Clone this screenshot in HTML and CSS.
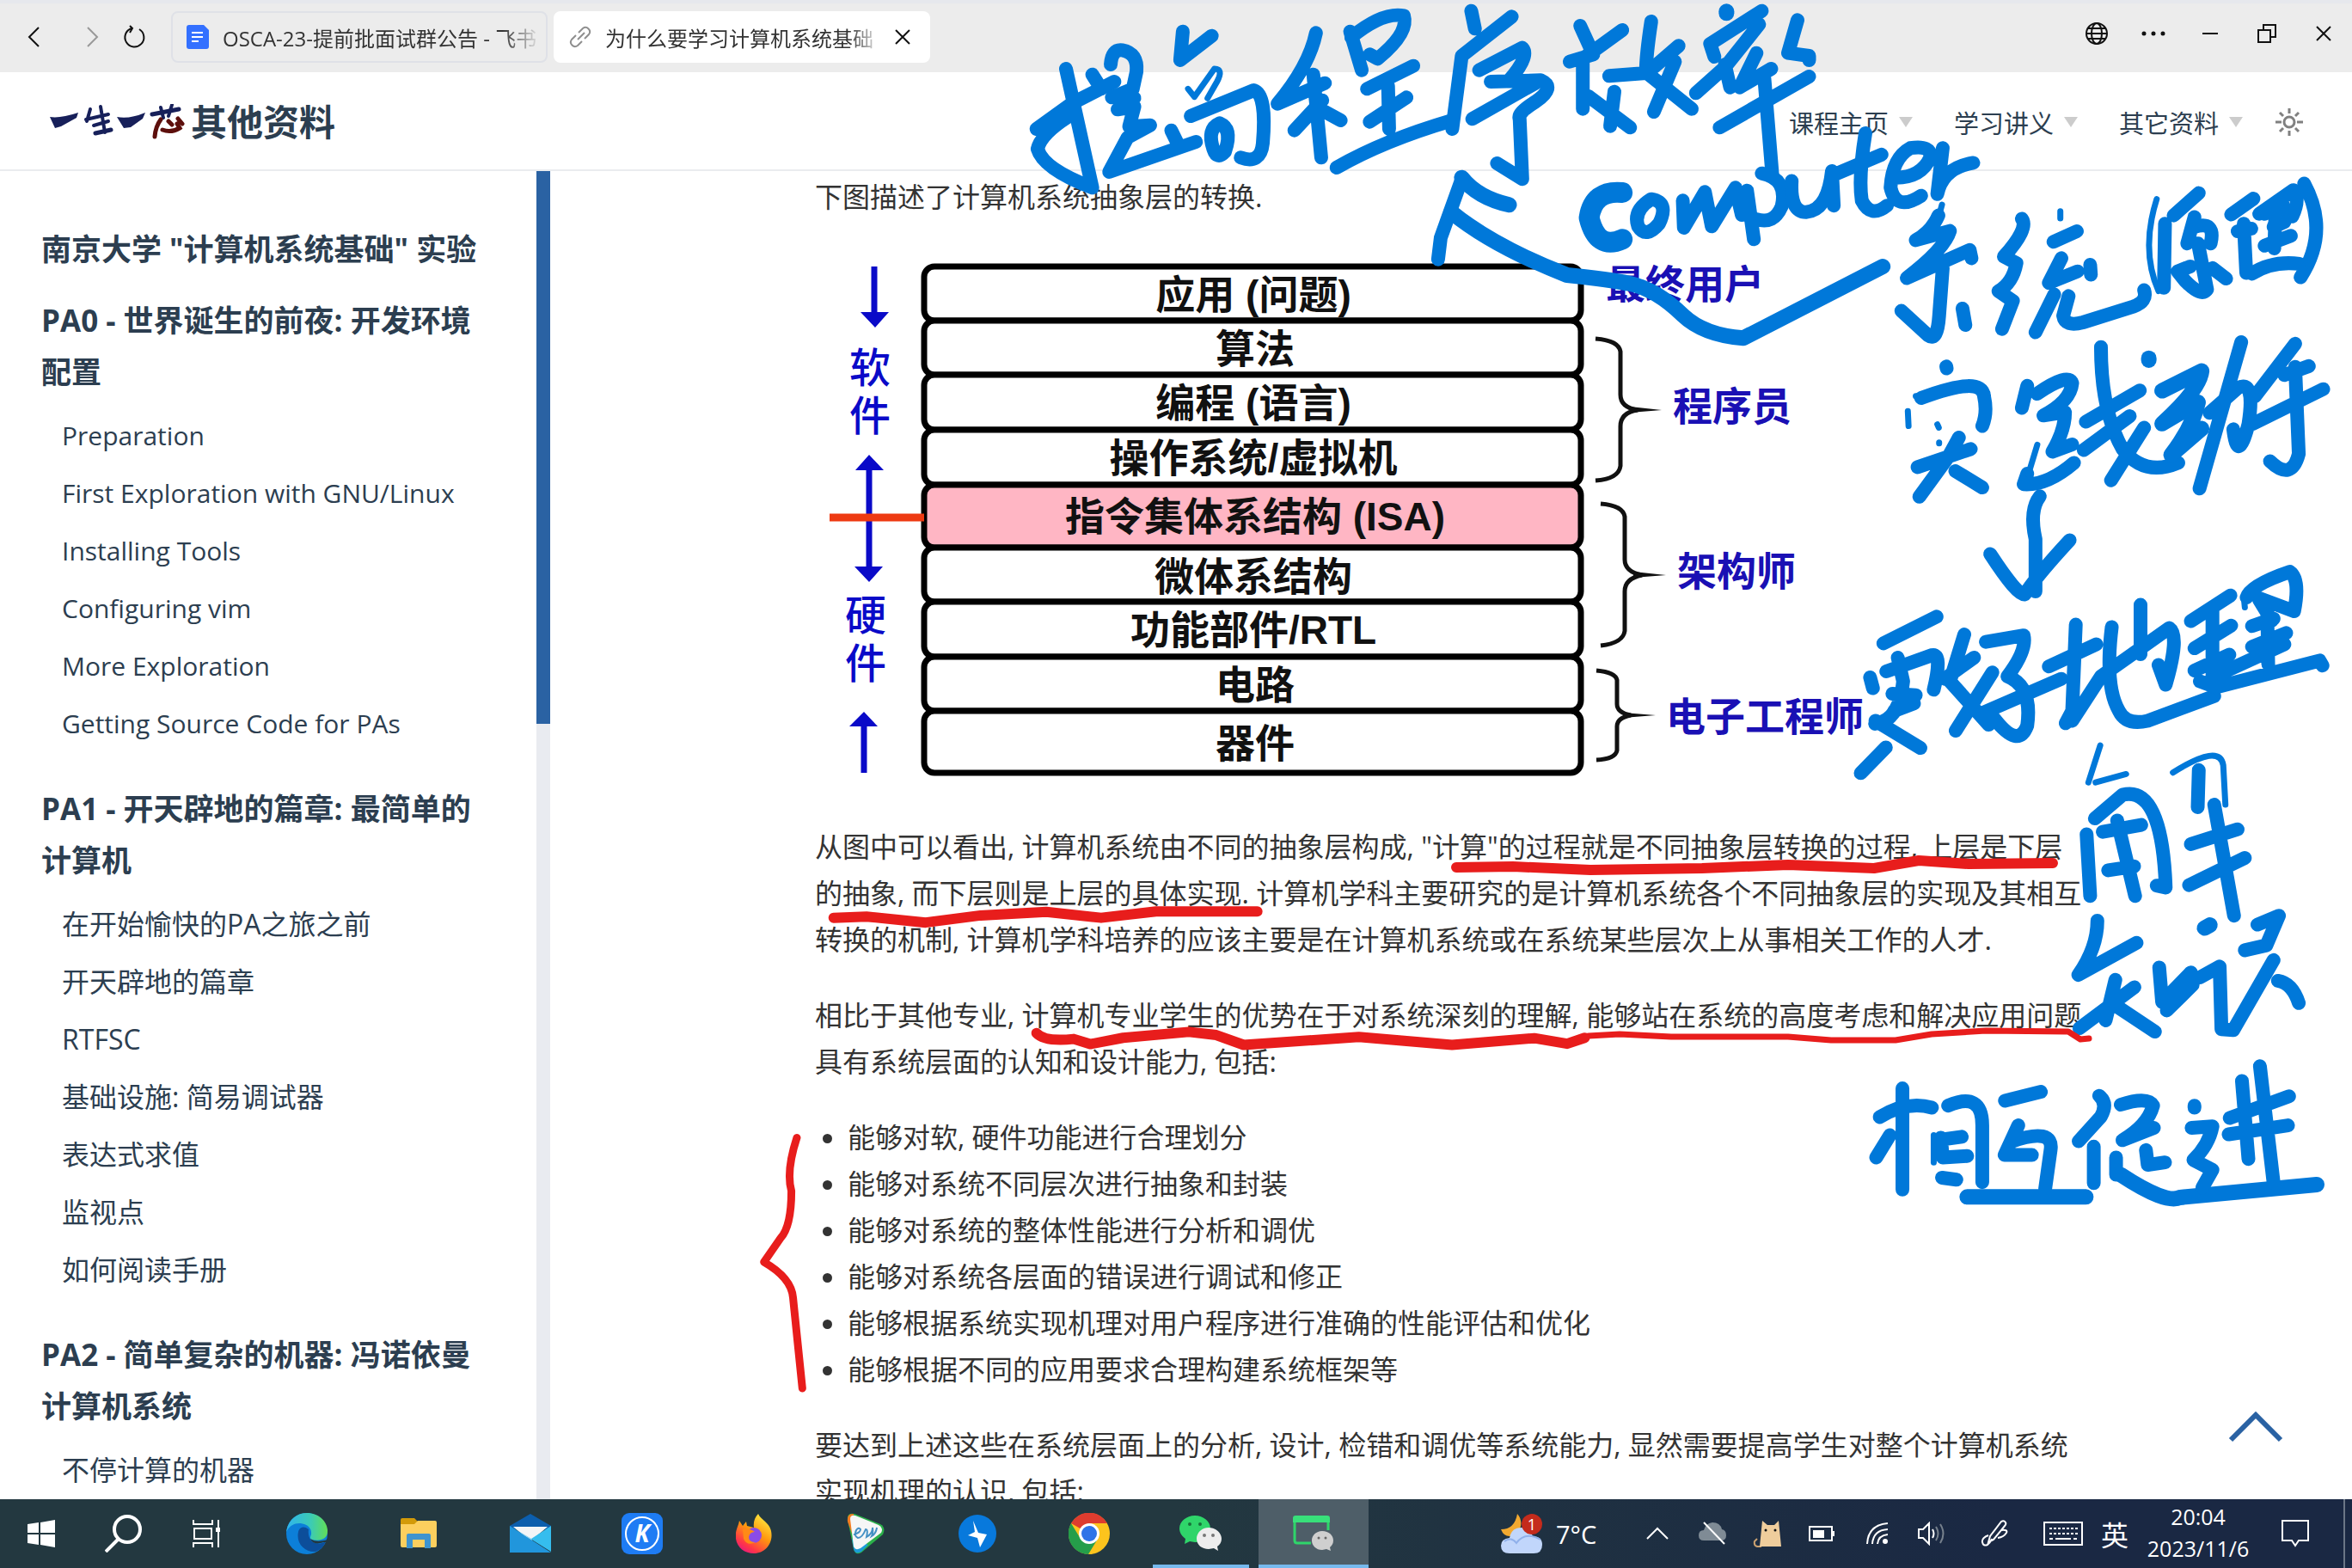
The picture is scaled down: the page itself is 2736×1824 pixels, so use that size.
FILE: index.html
```html
<!DOCTYPE html>
<html lang="zh-CN">
<head>
<meta charset="utf-8">
<title>为什么要学习计算机系统基础</title>
<link rel="stylesheet" href="styles.css">
</head>
<body>
<div class="screen">

<header class="browser">
  <div class="browser-nav">
    <button class="nav-btn back" aria-label="后退"><svg width="20" height="28" viewBox="0 0 20 28"><path d="M15 3 4 14l11 11"/></svg></button>
    <button class="nav-btn forward" aria-label="前进"><svg width="20" height="28" viewBox="0 0 20 28"><path d="M5 3l11 11L5 25"/></svg></button>
    <button class="nav-btn reload" aria-label="刷新"><svg width="28" height="28" viewBox="0 0 28 28"><path d="M19 5a11 11 0 1 1-9-1M8 1l3 3-3 5"/></svg></button>
  </div>
  <div class="tabs">
    <div class="tab">
      <svg width="26" height="28" viewBox="0 0 26 28"><path d="M3 0h17l6 6v19a3 3 0 0 1-3 3H3a3 3 0 0 1-3-3V3a3 3 0 0 1 3-3z" fill="#3370ff"/><path d="M6 9h13M6 14h13M6 19h8" stroke="#fff" stroke-width="2"/></svg>
      <span class="tab-title">OSCA-23-提前批面试群公告 - 飞书</span>
    </div>
    <div class="tab active">
      <svg width="26" height="26" viewBox="0 0 26 26" fill="none" stroke="#8f8f8f" stroke-width="2"><path d="M10 16l8-8M11 8l5-5a5 5 0 0 1 7 7l-5 5M15 18l-5 5a5 5 0 0 1-7-7l5-5"/></svg>
      <span class="tab-title">为什么要学习计算机系统基础</span>
      <button class="tab-close" aria-label="关闭标签页"><svg width="18" height="18" viewBox="0 0 18 18"><path d="M1 1l16 16M17 1 1 17"/></svg></button>
    </div>
  </div>
  <div class="window-controls">
    <button aria-label="在浏览器中打开"><svg width="28" height="28" viewBox="0 0 28 28"><circle cx="14" cy="14" r="12"/><ellipse cx="14" cy="14" rx="6" ry="12"/><path d="M2 14h24M4 8h20M4 20h20"/></svg></button>
    <button aria-label="更多"><svg width="28" height="28" viewBox="0 0 28 28"><path class="dots" d="M3 14h0M14 14h0M25 14h0"/></svg></button>
    <button aria-label="最小化"><svg width="28" height="28" viewBox="0 0 28 28"><path d="M5 14h18"/></svg></button>
    <button aria-label="还原"><svg width="28" height="28" viewBox="0 0 28 28"><path d="M4 10h14v14H4zM10 10V4h14v14h-6"/></svg></button>
    <button aria-label="关闭"><svg width="28" height="28" viewBox="0 0 28 28"><path d="M6 6l16 16M22 6 6 22"/></svg></button>
  </div>
</header>

<div class="site-header">
  <a class="brand" href="#">
    <svg class="brand-logo" width="158" height="42" viewBox="0 0 158 42" role="img" aria-label="一生一芯">
      <g fill="#17205a"><path d="M1 15q12 2 33-5l-2 6-18 10-7 2z"/><path d="M79 15q14 3 33-5l-3 7-14 10-8 1z"/></g>
      <g fill="none" stroke="#17205a" stroke-width="4" stroke-linecap="round"><path d="M48 6l-4 14M60 3l5 30M43 18l26-6M52 25l17-5"/><path d="M54 34l18-4M120 12l31-6" stroke-width="5"/><path d="M130 4l3 12M143 1l-4 13"/></g>
      <g fill="none" stroke="#5d0f0c" stroke-width="5" stroke-linecap="round"><path d="M130 18q-6 8-7 20M132 30q10 4 20-2l-3-5M139 20l4 4M150 17l5 6"/></g>
    </svg>
    <span class="brand-name">其他资料</span>
  </a>
  <nav class="site-nav">
    <a href="#">课程主页<i class="caret"></i></a>
    <a href="#">学习讲义<i class="caret"></i></a>
    <a href="#">其它资料<i class="caret"></i></a>
    <button class="theme" aria-label="切换主题"><svg width="32" height="32" viewBox="0 0 32 32"><circle cx="16" cy="16" r="6"/><path d="M16 0v6M16 26v6M0 16h7M25 16h7M5 5l4 4M23 23l4 4M5 27l4-4M23 9l4-4"/></svg></button>
  </nav>
</div>

<div class="body">
  <aside class="sidebar">
    <nav class="toc">
      <h2>南京大学 "计算机系统基础" 实验</h2>
      <h2>PA0 - 世界诞生的前夜: 开发环境配置</h2>
      <ul class="latin">
        <li><a href="#">Preparation</a></li>
        <li><a href="#">First Exploration with GNU/Linux</a></li>
        <li><a href="#">Installing Tools</a></li>
        <li><a href="#">Configuring vim</a></li>
        <li><a href="#">More Exploration</a></li>
        <li><a href="#">Getting Source Code for PAs</a></li>
      </ul>
      <h2>PA1 - 开天辟地的篇章: 最简单的计算机</h2>
      <ul>
        <li><a href="#">在开始愉快的PA之旅之前</a></li>
        <li><a href="#">开天辟地的篇章</a></li>
        <li><a href="#">RTFSC</a></li>
        <li><a href="#">基础设施: 简易调试器</a></li>
        <li><a href="#">表达式求值</a></li>
        <li><a href="#">监视点</a></li>
        <li><a href="#">如何阅读手册</a></li>
      </ul>
      <h2>PA2 - 简单复杂的机器: 冯诺依曼计算机系统</h2>
      <ul>
        <li><a href="#">不停计算的机器</a></li>
      </ul>
    </nav>
    <div class="scrollbar"><div class="thumb"></div></div>
  </aside>

  <main class="content">
    <article>
      <p>下图描述了计算机系统抽象层的转换.</p>
      <svg class="layers" viewBox="948 291 1480 634" role="img" aria-label="计算机系统抽象层">
        <g class="boxes">
          <rect x="1075" y="311" width="764" height="63" rx="12"/>
          <rect x="1075" y="374" width="764" height="63" rx="12"/>
          <rect x="1075" y="437" width="764" height="64" rx="12"/>
          <rect x="1075" y="501" width="764" height="64" rx="12"/>
          <rect class="isa" x="1075" y="565" width="764" height="73" rx="12"/>
          <rect x="1075" y="638" width="764" height="63" rx="12"/>
          <rect x="1075" y="701" width="764" height="64" rx="12"/>
          <rect x="1075" y="765" width="764" height="63" rx="12"/>
          <rect x="1075" y="828" width="764" height="72" rx="12"/>
        </g>
        <g class="box-text">
          <text x="1458" y="360">应用 (问题)</text>
          <text x="1460" y="423">算法</text>
          <text x="1458" y="486">编程 (语言)</text>
          <text x="1458" y="550">操作系统/虚拟机</text>
          <text x="1460" y="618">指令集体系结构 (ISA)</text>
          <text x="1458" y="688">微体系结构</text>
          <text x="1458" y="750">功能部件/RTL</text>
          <text x="1460" y="814">电路</text>
          <text x="1460" y="882">器件</text>
        </g>
        <g class="braces">
          <path d="M1856 395q27 2 29 15v50q0 15 20 18q-20 3-20 19v46q-2 15-29 17"/>
          <path d="M1862 587q26 2 28 15v50q0 14 20 18q-20 4-20 19v46q-2 14-28 17"/>
          <path d="M1857 781q22 2 24 11v28q0 10 16 13q-16 3-16 13v28q-2 10-24 11"/>
          <path class="tips" d="M1896 474l37 4-37 3zM1900 666l38 4-38 3zM1888 830l38 3-38 3z"/>
        </g>
        <g class="roles">
          <text x="1868" y="348">最终用户</text>
          <text x="1946" y="490">程序员</text>
          <text x="1951" y="682">架构师</text>
          <text x="1938" y="851">电子工程师</text>
        </g>
        <g class="side-text">
          <text x="988" y="446">软</text><text x="988" y="502">件</text>
          <text x="983" y="734">硬</text><text x="983" y="790">件</text>
        </g>
        <g class="arrows"><path d="M1017 311v56M1011 540v130M1005 840v60"/><path class="heads" d="M1001 364h33l-16 18zM995 548h33l-17-18zM994 660h33l-16 18zM988 846h33l-16-17z"/></g>
        <path d="M965 603h110" stroke="#ee3a12" stroke-width="9"/>
      </svg>
      <p>从图中可以看出, 计算机系统由不同的抽象层构成, "计算"的过程就是不同抽象层转换的过程, 上层是下层<br>的抽象, 而下层则是上层的具体实现. 计算机学科主要研究的是计算机系统各个不同抽象层的实现及其相互<br>转换的机制, 计算机学科培养的应该主要是在计算机系统或在系统某些层次上从事相关工作的人才.</p>
      <p>相比于其他专业, 计算机专业学生的优势在于对系统深刻的理解, 能够站在系统的高度考虑和解决应用问题<br>具有系统层面的认知和设计能力, 包括:</p>
      <ul>
        <li>能够对软, 硬件功能进行合理划分</li>
        <li>能够对系统不同层次进行抽象和封装</li>
        <li>能够对系统的整体性能进行分析和调优</li>
        <li>能够对系统各层面的错误进行调试和修正</li>
        <li>能够根据系统实现机理对用户程序进行准确的性能评估和优化</li>
        <li>能够根据不同的应用要求合理构建系统框架等</li>
      </ul>
      <p>要达到上述这些在系统层面上的分析, 设计, 检错和调优等系统能力, 显然需要提高学生对整个计算机系统<br>实现机理的认识, 包括:</p>
    </article>
    <button class="to-top" aria-label="回到顶部"><svg width="64" height="36" viewBox="0 0 64 36"><path d="M3 33 32 4l29 29"/></svg></button>
  </main>
</div>

<footer class="taskbar">
  <button class="sys" aria-label="开始"><svg width="32" height="32" viewBox="0 0 32 32" fill="#fff"><path d="M0 5l13-2v12H0zM15 3l17-3v15H15zM0 17h13v12L0 27zM15 17h17v15l-17-3z"/></svg></button>
  <button class="sys" aria-label="搜索"><svg width="44" height="44" viewBox="0 0 44 44" fill="none" stroke="#fff" stroke-width="4"><circle cx="26" cy="17" r="15"/><path d="M16 28 1 43"/></svg></button>
  <button class="sys" aria-label="任务视图"><svg width="32" height="32" viewBox="0 0 32 32" fill="none" stroke="#fff" stroke-width="2"><path d="M1 0v5h22V0M1 32v-5h22v5M2 10h20v12H2zM30 0v32"/><path d="M27 9h5v5h-5z" fill="#fff" stroke="none"/></svg></button>
  <div class="apps">
    <button aria-label="Edge"><svg width="48" height="48" viewBox="0 0 48 48"><defs><linearGradient id="eg" x1="0" x2="1"><stop offset="0" stop-color="#2fb4ee"/><stop offset=".6" stop-color="#3ccbb4"/><stop offset="1" stop-color="#62de56"/></linearGradient></defs><circle cx="24" cy="24" r="24" fill="#0c7fd8"/><path d="M14 22c-3 14 8 24 20 23 6-2 10-7 12-12-12 7-22-1-20-14-6-5-11-2-12 3z" fill="#0c4e9a"/><path d="M0 22C2 8 12 0 24 0c14 0 24 10 24 21 0 10-9 12-18 10-3-1-2-3-1-6 1-10-8-13-14-13C8 12 3 16 0 22z" fill="url(#eg)"/><path d="M28 30c6 4 13 3 20 1v3l-5 0c-8 3-13 1-15-4z" fill="#233840"/></svg></button>
    <button aria-label="文件资源管理器"><svg width="42" height="36" viewBox="0 0 42 36"><path d="M0 2q0-2 2-2h14l4 4-3 5H0z" fill="#d29a09"/><path d="M0 7h16l4-4h20q2 0 2 2v27q0 2-2 2H2q-2 0-2-2z" fill="#fccf5e"/><path d="M7 35V20q0-2 2-2h24q2 0 2 2v15h-7V25H14v10z" fill="#3f94cf"/></svg></button>
    <button aria-label="邮件"><svg width="48" height="46" viewBox="0 0 48 46"><path d="M0 14 24 0l24 14v4H0z" fill="#0c5ead"/><path d="M4 15h40L24 32z" fill="#f3f5f7"/><path d="M0 14l48 30V14L25 29z" fill="#35bdee"/><path d="M0 14v31h48z" fill="#2196dc"/></svg></button>
    <button aria-label="K"><svg width="48" height="48" viewBox="0 0 48 48"><rect width="48" height="48" rx="9" fill="#1e7cf4"/><circle cx="24" cy="24" r="19" fill="none" stroke="#fff" stroke-width="2"/><text x="24" y="34" class="k">K</text></svg></button>
    <button aria-label="Firefox"><svg width="42" height="46" viewBox="0 0 42 46"><defs><linearGradient id="ff" x1=".8" y1="0" x2=".2" y2="1"><stop offset="0" stop-color="#fff044"/><stop offset=".45" stop-color="#ff980e"/><stop offset=".8" stop-color="#ff3647"/><stop offset="1" stop-color="#e31587"/></linearGradient></defs><path d="M26 0c3 7 13 10 15 20 3 14-7 26-20 26C8 46-2 36 0 22 1 16 3 14 4 8l4 6 4-5 1 5 8 2c-1-6 1-12 5-16z" fill="url(#ff)"/><circle cx="21" cy="25" r="9" fill="#8a4be8"/><path d="M8 18q8-2 14 3-6 0-7 6 0 6 8 6-10 5-14-4z" fill="#ff8a16"/></svg></button>
    <button aria-label="EV"><svg width="44" height="48" viewBox="0 0 44 48"><path d="M1 8Q0-1 9 1l30 12q7 4 3 12L17 46q-7 4-9-4z" fill="#2bb04a"/><path d="M1 10Q0 0 8 1L6 24z" fill="#f47b20"/><path d="M6 30l2 12q2 7 9 3l8-8z" fill="#1c9cd8"/><path d="M4 7q0-5 6-4l27 11q6 4 3 9L16 41q-6 3-8-2z" fill="#f6f6f6"/><path d="M8 25q8-2 8-6-2-3-5 1-3 7 2 9 5 0 9-10 3 0 1 9 7-4 7-11 1 6-1 10 5-3 6-10" fill="none" stroke="#4490c4" stroke-width="2"/></svg></button>
    <button aria-label="Thunder"><svg width="44" height="44" viewBox="0 0 44 44"><circle cx="22" cy="22" r="22" fill="#0879dc"/><path d="M17 7l2 13-8 4 11 3 3 11 8-15-10-2z" fill="#fff"/></svg></button>
    <button aria-label="Chrome"><svg width="48" height="48" viewBox="0 0 48 48"><circle cx="24" cy="24" r="24" fill="#fcc41d"/><path d="M24 24 3 12A24 24 0 0 1 45 12H24z" fill="#de3c2f"/><path d="M3 12a24 24 0 0 0 20 36l11-18-20 0z" fill="#259e4a"/><circle cx="24" cy="24" r="12" fill="#fff"/><circle cx="24" cy="24" r="9" fill="#2f74e8"/></svg></button>
    <button class="running" aria-label="微信"><svg width="50" height="42" viewBox="0 0 50 42"><path d="M18 0c10 0 18 7 18 15s-8 16-18 16l-6-1-6 3 1-6C3 24 0 20 0 15 0 7 8 0 18 0z" fill="#2fd56a"/><path d="M34 14c8 0 15 6 15 13 0 4-2 7-5 9l1 5-5-3-6 1c-8 0-14-5-14-12s6-13 14-13z" fill="#ededed"/><path d="M12 10h0M24 10h0" stroke="#17713a" stroke-width="4" stroke-linecap="round"/><path d="M29 23h0M39 23h0" stroke="#777" stroke-width="4" stroke-linecap="round"/></svg></button>
    <button class="current" aria-label="微信窗口"><svg width="48" height="42" viewBox="0 0 48 42"><path d="M2 8v21q0 3 3 3h16M41 8v9" fill="none" stroke="#2fd56a" stroke-width="3"/><path d="M0 8V3q0-3 3-3h37q3 0 3 3v5z" fill="#38e07a"/><path d="M34 18c8 0 13 5 13 11 0 4-2 6-4 8l1 4-5-2-5 1c-7 0-12-5-12-11s5-11 12-11z" fill="#cfcfcf"/><path d="M30 26h0M38 26h0" stroke="#666" stroke-width="3" stroke-linecap="round"/></svg></button>
  </div>
  <div class="tray">
    <button class="weather"><svg width="48" height="46" viewBox="0 0 48 46"><path d="M19 0c9 10 3 25-9 26Q3 26 0 18 16 18 19 0z" fill="#f2a930"/><path d="M10 28q2-12 14-12 10 0 13 10 11 0 11 10t-10 10H10Q0 46 0 37q0-8 10-9z" fill="#c1d6fb"/><path d="M4 32q8-6 14 2 10-14 28-4" fill="none" stroke="#8fb0ea" stroke-width="2"/><circle cx="36" cy="12" r="12" fill="#c42b1c"/><text x="36" y="19" class="badge">1</text></svg><span>7°C</span></button>
    <button aria-label="显示隐藏的图标"><svg width="26" height="16" viewBox="0 0 26 16"><path d="M1 14 13 2l12 12"/></svg></button>
    <button aria-label="OneDrive"><svg width="32" height="28" viewBox="0 0 32 28"><path d="M6 22q-6 0-6-6t6-6Q8 2 16 1q9 0 11 8 5 1 5 7 0 6-6 6z" fill="#7f8b95" stroke="none"/><path d="M6 1l24 25"/></svg></button>
    <button aria-label="猫"><svg width="34" height="34" viewBox="0 0 34 34"><path d="M10 32H5q-4-1-3-6l3-3" stroke="#c9a070"/><path d="M8 32 11 2l6 5h8l5-5 3 30z" fill="#efcd9c" stroke="none"/><path d="M15 13h0M26 13h0" stroke="#111" stroke-width="3" stroke-linecap="round"/></svg></button>
    <button aria-label="电池"><svg width="32" height="18" viewBox="0 0 32 18"><path d="M1 1h26v16H1zM29 6v6"/><path d="M5 5h13v9H5z" fill="#fff" stroke="none"/></svg></button>
    <button aria-label="网络"><svg width="26" height="26" viewBox="0 0 26 26"><path d="M1 25Q2 3 25 1M7 25Q8 9 25 8M13 25q1-10 12-11"/><circle cx="22" cy="22" r="3" fill="#fff" stroke="none"/></svg></button>
    <button aria-label="音量"><svg width="34" height="28" viewBox="0 0 34 28"><path d="M1 9h5l7-7v24l-7-7H1zM17 9q3 5 0 10"/><path d="M21 6q5 8 0 16M26 3q7 11 0 22" stroke="#77818c"/></svg></button>
    <button class="wide" aria-label="Windows Ink"><svg width="32" height="32" viewBox="0 0 32 32"><path d="M9 26l2-7L24 2q3-2 5 1 1 2-1 4L15 23zM9 18q-8 3-7 8 1 5 6 3 3-2 5-7M24 12q8-1 6 3-3 5-10 6"/></svg></button>
    <button class="wide" aria-label="触摸键盘"><svg width="46" height="28" viewBox="0 0 46 28"><path d="M1 1h44v26H1z"/><path d="M7 8h33M7 14h33" stroke-dasharray="3 2"/><path d="M7 20h4M14 20h18M35 20h4"/></svg></button>
    <button class="ime">英</button>
    <button class="clock"><span>20:04</span><span>2023/11/6</span></button>
    <button class="notice" aria-label="通知"><svg width="34" height="34" viewBox="0 0 34 34"><path d="M2 2h30v23H21l-4 6-4-6H2z"/></svg></button>
    <span class="peek"></span>
  </div>
</footer>

<!-- pen annotations drawn over the whole screen -->
<svg class="ink" viewBox="0 0 2736 1824" aria-hidden="true">
  <svg class="blue" x="1180" y="0" width="960" height="420" viewBox="0 0 1568 1260" preserveAspectRatio="none">
    <path d="M98 240 148 655Q55 590 44 520 50 470 100 410M42 450 110 360 190 285M148 260l17 50"/>
    <path d="M183 225q2-55 22-50 30 10 27 75l-7 60-40 30M228 342l-32 40 32-10-10 70 40-5-43 43-35 120 165-105M298 455l12 45"/>
    <path d="M320 110l-5 100 60-85M335 405 455 315q25 15 17 185-4 75-42 50"/>
    <path class="fine" d="M330 310l12 28 38-98q18 0 5 45l-18 58"/>
    <path d="M390 430q-25 20-12 90 7 40 22 10 15-80-10-100z"/>
    <path d="M573 115Q560 230 500 362l90-72M568 260l15 290M585 350l-53 105M590 390l30 30"/>
    <path d="M638 110l22 135M640 130q60-90 100-75 10 60-50 150l-15-15M670 310l88-80M710 300l2 150M675 425l70-85M612 585q90-95 220-165"/>
    <path d="M868 38l7 62M945 58 850 195l-18 255M883 245l82-78q15 30-25 113M905 285l95-5q30 25-10 75-35 40-30 60l5 210-48-55M870 415 990 290"/>
    <path d="M1075 90l25 100-45 25M1155 105l-75 100v175M1090 335l80 110M1140 320l-8 120M1210 75q-10 120-10 180l-70 10M1262 160l-60 95 85 125M1255 215l-40 175"/>
    <path class="broad" d="M1353 40v6"/>
    <path d="M1420 38l-98 115 8 45M1415 85l-65 150-55 90M1350 225l10 80M1410 185l-32 120 60-65M1488 70l-18 115 40 10v15M1340 445l170-178M1425 275l15 335"/>
    <path class="broad" d="M830 740q80 120 220 220 80 15 120 30 50 20 100 110 40 70 115 80L1650 930M850 620q30 70 90 95"/>
    <path d="M805 905l5-75 40-205"/>
    <path class="heavy" d="M1155 672q-55-10-63 88 15 115 63 75"/>
    <path d="M1210 695q-35 40-25 95 15 45 40-10 20-75-15-85z"/>
    <path d="M1270 700l2 95 40-125 13 120 45-135 12 95M1392 665l13 170M1420 605q50 20 38 115-15 65-48 45"/>
  </svg>
  <svg class="blue" x="2080" y="0" width="656" height="600" viewBox="0 0 1568 1568" preserveAspectRatio="none">
    <path d="M10 550q-5 95 40 95 60-5 72-125l5 105M215 405q-20 135-10 205 25 55 70 15M130 530l130-60M300 540q70 0 95-60 5-40-55-30-50 30-55 120 15 75 85 25M430 450l-15 140q15-80 100-95"/>
    <path class="fine" d="M428 622l-10 40"/>
    <path d="M418 655q-20 50-63 75l95-28q-15 55-120 143l175-85 5 25M430 815l-10 145q-5 80-30 60l-75-75M485 938l8 50"/>
    <path d="M650 665q20 30-50 115l35 20q-10 60-50 85l40 30-30 85M738 735l65-32M760 785l-35 75 80-35M740 895l-52 115M780 900l-15 60q5 35 55 20l140-48q40-15 30-50M840 805l2 30"/>
    <path class="fine" d="M1025 605q-45 155 5 280M757 642v22"/>
    <path d="M1048 680l-3 195M1072 655l70-68M1130 660l-20 80M1130 690q60-20 45 50M1140 740l25 140q-15 25-60-25l-22-30 35-15M1180 815l38 32"/>
    <path d="M1232 652l62-48M1250 703l38-8M1267 680l7 150M1310 650l95-72q20 25-3 80M1325 650l50-30-25 70 30-15M1355 650l-3 105M1325 747l73-30M1290 832q55-40 132-30M1435 558q72 145-10 285"/>
    <path d="M370 1210q170-70 175-5 10 50-5 90M475 1330l-30 60-80 120M360 1420l148-55M465 1432l75 50"/>
    <path class="fine" d="M333 1250l2 45M415 1290l4 10M420 1345v3M355 1204h2"/>
    <path d="M440 1114l1 6M665 1173l-15 67M692 1197q88-65 98-32-5 55-80 98l60-10q0 55-35 120l55-22M665 1440l-10 32q65 5 140-65M870 1055q0 195 60 310 60 85 155 42M828 1282l150-95M822 1368l128-103M990 1300l-92 160"/>
    <path class="fine" d="M693 1352l-25 90"/>
    <path class="broad" d="M1003 1089v6"/>
    <path class="broad" d="M1040 1188l110-60q-5 55-110 160l100-65q-15 75-75 160l85-80"/>
    <path d="M1260 1040l-116 445M1172 1255l78-75q50-30 30 110-30 125-42 15M1410 1045l-112 160M1448 1113l-68 27M1293 1288l195-105M1410 1115l10 265q-20 85-80 22"/>
  </svg>
  <svg class="blue" x="2080" y="540" width="656" height="900" viewBox="0 0 1568 1568" preserveAspectRatio="none">
    <path d="M700 65q-30 28-12 87v106M562 182q76 85 96 82 30-35 125-110"/>
    <path d="M265 363l148-54M228 432l8 22M273 420l127-33q30-5 5 70M305 392l15 48q-10 80-78 86M290 465l65 3M295 500l55-15M243 520l125 55M272 574l-70 52"/>
    <path d="M490 345l-40 95 108 88M435 435l82-43M568 422l-102 118M550 360l105-13q10 30-45 83 70 20 55 100-25 48-92-15M545 503l215-68"/>
    <path d="M800 325l-10 175-18 25M725 410l132-45M790 520l80-90 190-98q30 15-10 115l-20-40M900 330q-20 120 20 170 20 30 80 20l185-50M980 285v100"/>
    <path d="M1120 318l110-52M1180 298v140M1130 373l102-46M1130 418l97-32M1145 440l45 12 288-54 8 10M1275 270q10-25 120-52 30 15 12 80l-95-26M1310 275l35 42M1290 328l60-15M1332 285l3 120M1290 370l95-28M1200 425l180-60"/>
    <path class="fine" d="M868 570l-33 75M855 645l85-17M1070 625q130-60 140-15l6 80M1268 275l2 15"/>
    <path d="M853 718l77-48q110-20 120 188l-25-4M830 750l10 125M875 745l107-14M915 722l50 153M890 823l72-8M1142 620l-3 75M1185 690l55 225M1120 770l130-30M1115 853l155-55"/>
    <path d="M860 925q0 55-53 110l162-65M910 1045l-27 82M810 1143l153-83M900 1092l120 58M1032 1020l8 70 80-60 5 25-72 52M1145 1040l55-22 5 127 33 2 112-142M1305 933l60-18-35 60-60 10M1362 1047q40 5 58 45"/>
    <path class="broad" d="M1158 940l15-6"/>
    <path d="M318 1265v205M255 1323q75-33 145-19M283 1360l-38 45M445 1300q95-30 95 40v115M435 1368l48-5M425 1365l5 40 68-3M428 1446l40 4M603 1290l100-18M640 1340l-38 60h76M620 1373q120-30 110 17l-15 78"/>
    <path class="fine" d="M405 1360v55"/>
    <path class="broad" d="M498 1485h330M925 1440q125 60 165 46l380-26"/>
    <path d="M865 1280q25 15 5 42l-62 50M850 1383v74M925 1298q75-18 90 2-15 40-85 70l87-25M995 1390l5 30 48-5M912 1405v35M1130 1300v4M1122 1345l58-3q-10 38-53 68l53 20-28 36M1262 1250l18 158M1312 1220l38 237M1228 1325l165-44M1225 1358l165-18"/>
  </svg>
  <g class="red">
    <path d="M1694 1009l66-1 90 4 130-2 100-4 100 4 52-9 58 4 98-1"/>
    <path d="M1848 1205l36-2 60 3 136 0 50 4h75l42-7 63-4 96 1 14 9 10-1" class="fine"/>
  </g>
  <svg class="red" x="860" y="940" width="1000" height="720" viewBox="0 0 1568 1568" preserveAspectRatio="none">
    <path d="M172 278l60-3 108 15 100-18 120-9 100 15 100-16h185M542 570q15 23 68 15l30 13 60-16 120-15 50 8 50 25 210-20 170 20 150-17 60 14 32-15"/>
    <path class="mid" d="M105 835q-20 85-10 135 0 90-20 120l-30 60q50 40 53 90l17 230"/>
  </svg>
</svg>
</div>
</body>
</html>
```
FILE: styles.css
```css
* { box-sizing: border-box; }

body {
  margin: 0;
  font-family: "Open Sans", "Noto Sans CJK SC", sans-serif;
  color: #333;
  background: #fff;
}

button {
  display: flex;
  align-items: center;
  justify-content: center;
  margin: 0;
  padding: 0;
  border: 0;
  background: none;
  font: inherit;
  color: inherit;
}

a { color: inherit; text-decoration: none; }
h2, p, ul { margin: 0; padding: 0; }
svg { flex: none; }

.screen {
  position: relative;
  display: flex;
  flex-direction: column;
  height: 100vh;
  overflow: hidden;
}

/* browser bar */
.browser {
  display: flex;
  flex: none;
  height: 84px;
  background: #ececec;
  border-top: 4px solid #e6e8ed;
}
.browser-nav { display: flex; width: 199px; padding-bottom: 2px; }
.nav-btn svg, .tab-close svg { fill: none; stroke: #111; stroke-width: 2; }
.back { width: 80px; }
.forward { width: 54px; }
.forward svg { stroke: #999; }
.reload { width: 46px; }
.tabs { display: flex; gap: 7px; padding: 9px 0 11px; }
.tab {
  display: flex;
  align-items: center;
  gap: 16px;
  width: 438px;
  padding: 0 6px 0 16px;
  border: 2px solid #dfe1e7;
  border-radius: 8px;
  font-size: 24px;
}
.tab.active { border-color: #fff; background: #fff; }
.tab-title {
  flex: 1;
  overflow: hidden;
  white-space: nowrap;
  mask-image: linear-gradient(to right, #000 88%, transparent);
}
.tab-close { width: 48px; height: 44px; margin-left: -16px; }
.window-controls { display: flex; margin-left: auto; padding-bottom: 10px; }
.window-controls button { width: 66px; }
.window-controls svg { fill: none; stroke: #111; stroke-width: 2; }
.window-controls .dots { stroke-width: 5; stroke-linecap: round; }

/* site header */
.site-header {
  display: flex;
  flex: none;
  align-items: center;
  height: 115px;
  padding: 3px 57px 0;
  border-bottom: 2px solid #eaecef;
  color: #2c3e50;
}
.brand { display: flex; align-items: center; gap: 7px; }
.brand-name { font-size: 42px; font-weight: 700; line-height: 60px; }
.site-nav { display: flex; align-items: center; gap: 48px; margin-left: auto; font-size: 29px; }
.site-nav a { display: flex; align-items: center; gap: 12px; }
.caret { border: 8px solid transparent; border-top: 12px solid #ccc; border-bottom: 0; }
.theme { margin-left: -10px; }
.theme svg { fill: none; stroke: #808080; stroke-width: 3; }

/* page body */
.body { display: flex; flex: 1; min-height: 0; }
.sidebar { display: flex; width: 640px; color: #2c3e50; overflow: hidden; }
.toc { flex: 1; padding: 61px 48px 0; }
.toc h2 { font-size: 35px; font-weight: 700; line-height: 60px; }
.toc h2 + h2 { margin-top: 23px; }
.toc ul { margin: 10px 0 36px; padding-left: 24px; list-style: none; font-size: 32px; line-height: 67px; white-space: nowrap; }
.toc .latin { font-size: 30px; }
.scrollbar { width: 16px; background: #e9ebf0; }
.thumb { height: 41.6%; background: #2a62a3; }

.content { position: relative; flex: 1; overflow: hidden; }
article {
  max-width: 1480px;
  margin: 0 auto;
  padding-top: 3px;
  font-size: 32px;
  line-height: 54px;
  white-space: nowrap;
}
article > * + * { margin-top: 34px; }
article ul { padding-left: 38px; }
.to-top { position: absolute; right: 80px; bottom: 66px; }
.to-top svg { fill: none; stroke: #2a62a3; stroke-width: 6; }

/* layer diagram */
.layers { display: block; width: 100%; font-weight: 700; }
.boxes rect { fill: #fff; stroke: #000; stroke-width: 7; }
.boxes .isa { fill: #ffb6c4; }
.box-text { font-size: 46px; fill: #111; text-anchor: middle; }
.box-text, .roles { font-family: "Liberation Sans", "Noto Sans CJK SC", sans-serif; }
.roles { font-size: 46px; fill: #1a10b4; }
.side-text { font-size: 48px; font-weight: 500; fill: #0a0ac8; }
.braces { fill: none; stroke: #111; stroke-width: 5; }
.braces .tips { fill: #111; stroke: none; }
.arrows { stroke: #0a0ac8; stroke-width: 7; }
.arrows .heads { fill: #0a0ac8; stroke: none; }

/* taskbar */
.taskbar {
  display: flex;
  flex: none;
  height: 80px;
  background: linear-gradient(to right, #233840 50%, #1a2843 85%);
  color: #fff;
}
.sys { width: 96px; }
.apps { display: flex; margin-left: 4px; }
.apps button { width: 130px; }
.apps .running { background: linear-gradient(#76b9ed, #76b9ed) center bottom / 112px 4px no-repeat; }
.apps .current { width: 128px; margin-left: 2px; padding-top: 4px; background: #4e5e68; border-bottom: 4px solid #76b9ed; }
.k { font: italic 700 28px "Open Sans", sans-serif; fill: #fff; text-anchor: middle; }
.tray { display: flex; margin-left: auto; }
.tray button { width: 64px; }
.tray button svg { fill: none; stroke: #fff; stroke-width: 2; }
.tray .weather { justify-content: flex-start; gap: 16px; width: 150px; font-size: 29px; }
.tray .weather svg { stroke: none; }
.tray .badge { font-size: 18px; fill: #fff; text-anchor: middle; }
.tray .wide { width: 80px; }
.tray .ime { width: 40px; font-size: 32px; }
.tray .clock { flex-direction: column; width: 154px; padding-bottom: 2px; font-size: 25px; line-height: 37px; }
.tray .notice { width: 72px; }
.peek { width: 2px; margin: 0 8px 0 20px; background: #6b7686; }

/* pen annotations */
.ink { position: absolute; inset: 0; width: 100%; height: 100%; pointer-events: none; }
.ink svg { overflow: visible; }
.ink path {
  fill: none;
  stroke-width: 16px;
  stroke-linecap: round;
  stroke-linejoin: round;
  vector-effect: non-scaling-stroke;
}
.blue path { stroke: #0078d9; }
.red path { stroke: #e81d1c; stroke-width: 12px; }
.ink .fine { stroke-width: 7px; }
.ink .mid { stroke-width: 9px; }
.ink .broad { stroke-width: 18px; }
.ink .heavy { stroke-width: 24px; }
```
